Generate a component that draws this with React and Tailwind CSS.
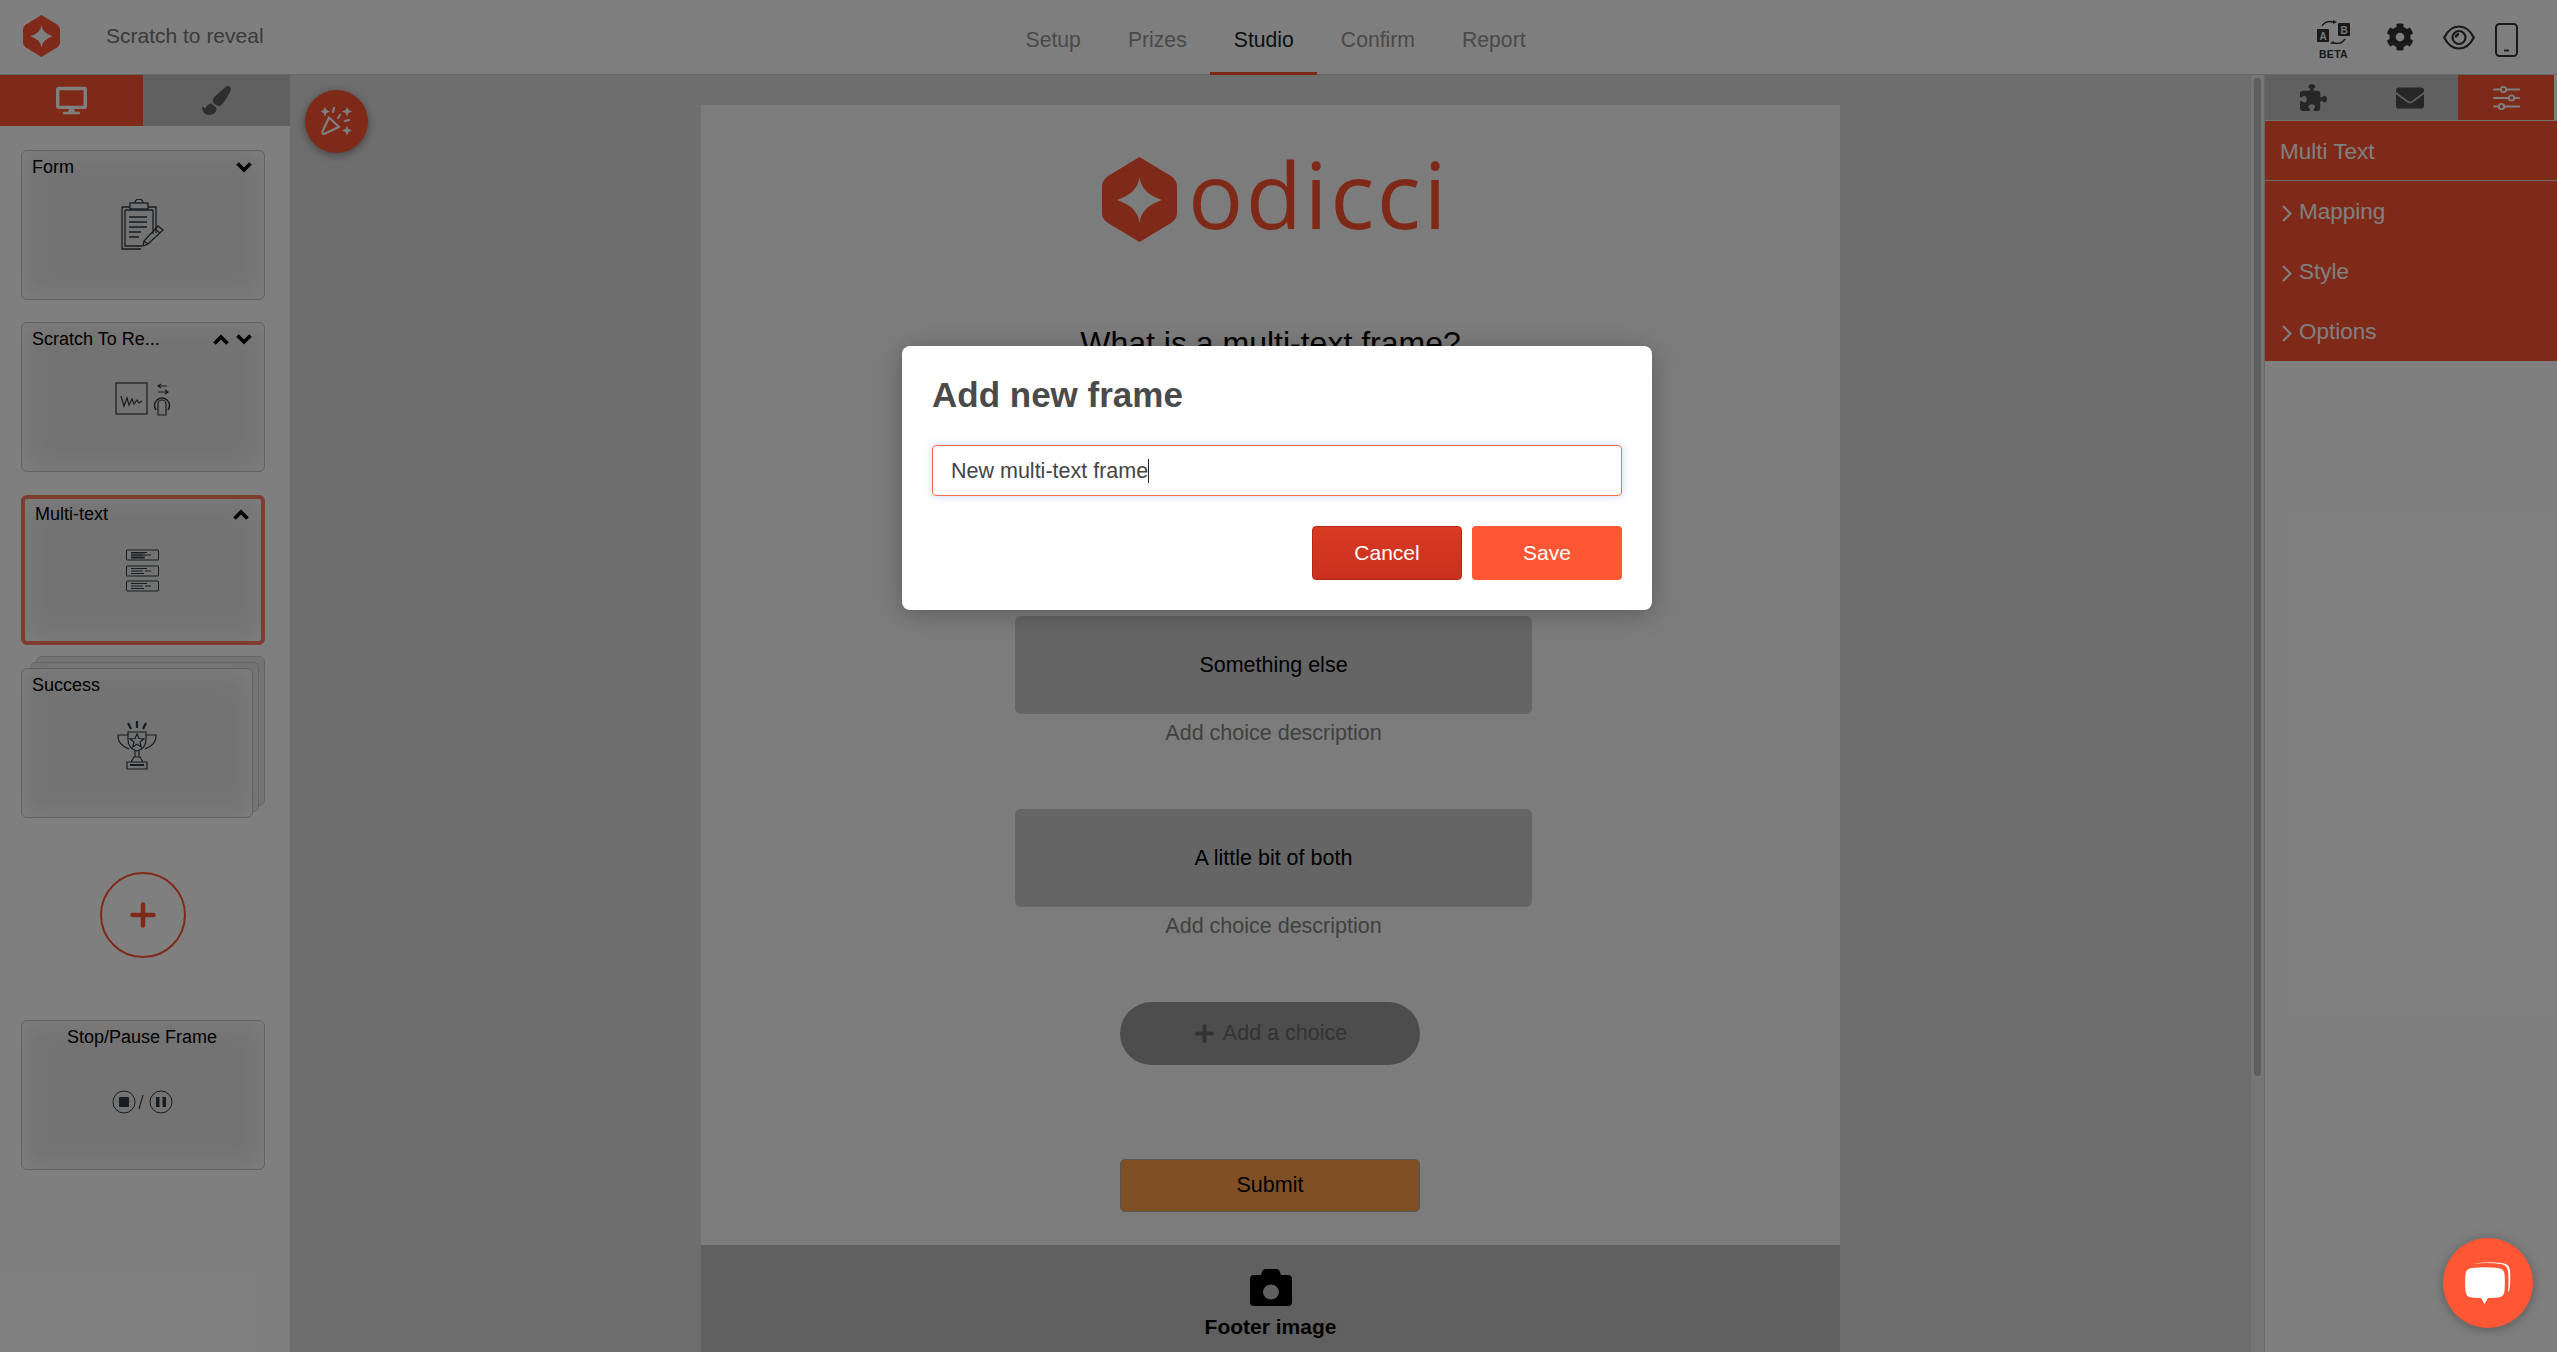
import React from "react";
import { FaDesktop, FaPaintBrush, FaEnvelope, FaCog, FaPlus } from "react-icons/fa";
import { FaPuzzlePiece } from "react-icons/fa6";
import { Plus } from "lucide-react";

const Hex = ({ className, star = "#ffffff", fill = "#ff5533" }) => (
  <svg viewBox="0 0 75 85" className={className}>
    <path fill={fill} d="M37.5 0 L69 19 Q75 23 75 30 L75 56 Q75 62 69 66 L37.5 85 L6 66 Q0 62 0 56 L0 30 Q0 23 6 19 Z" />
    <path fill={star} d="M37.5 20 Q39 36 60 43 Q39 50 37.5 66 Q36 50 15 43 Q36 36 37.5 20 Z" />
  </svg>
);

const Chevron = ({ up }) => (
  <svg viewBox="0 0 16 11" className="w-[16px] h-[11px]" fill="none" stroke="#000" strokeWidth="3.600" strokeLinejoin="miter">
    <path d={up ? "M1.500 9.500L8 3l6.500 6.500" : "M1.500 1.500L8 8l6.500-6.500"} />
  </svg>
);

const ClipboardIcon = () => (
  <svg viewBox="0 0 44 52" className="w-[44px] h-[52px]" fill="none" stroke="#2f3a40" strokeWidth="1.3">
    <path d="M1 8h8M27 8h8v26M1 8v42h19" />
    <path d="M4 11v36h17M32 11v24M4 11h28" />
    <rect x="9" y="4" width="18" height="6" />
    <path d="M14 4a4 4 0 0 1 8 0" />
    <path d="M8 18h18M8 23h18M8 28h18M8 33h12M8 38h10" strokeWidth="1.5" />
    <path d="M22 47l1-5 14-15 5 4-15 14z" />
    <path d="M34 30l5 4M23 42l4 3" />
  </svg>
);

const ScratchIcon = () => (
  <svg viewBox="0 0 56 34" className="w-[56px] h-[34px]" fill="none" stroke="#2f3a40" strokeWidth="1.2">
    <rect x="1" y="1" width="31" height="31" />
    <path d="M6 14l3 10 3-8 2 7 3-6 2 5 3-4 2 3 3-2" />
    <path d="M52 4H44M46 2l-3 2 3 2M43 10h10M50 8l3 2-3 2" />
    <path d="M43 33V22a4 4 0 0 1 8 0v11z" />
    <path d="M41 28a7.5 7.5 0 1 1 12 0" strokeWidth="1.5" />
  </svg>
);

const MultiTextIcon = () => (
  <svg viewBox="0 0 34 44" className="w-[34px] h-[44px]" fill="none" stroke="#2f3a40" strokeWidth="1">
    {[1, 17, 32].map((y) => (
      <g key={y}>
        <rect x="0.5" y={y} width="32" height="10" rx="0.5" />
        <path d={`M5 ${y + 2.5}h16M5 ${y + 5}h12M19 ${y + 5}h6M5 ${y + 7.5}h13`} />
      </g>
    ))}
    <rect x="5" y="3" width="14" height="7" fill="#2f3a40" opacity="0.5" stroke="none" />
  </svg>
);

const TrophyIcon = () => (
  <svg viewBox="0 0 40 52" className="w-[40px] h-[52px]" fill="none" stroke="#2f3a40" strokeWidth="1.2">
    <path d="M11 12h18v8c0 6-4 10-9 11-5-1-9-5-9-11z" />
    <path d="M11 15H1c0 8 4 11 11 14M29 15h10c0 8-4 11-11 14" />
    <path d="M20 14l2 4.500 5 .5-4 3 1.200 5-4.200-2.700-4.200 2.700 1.200-5-4-3 5-.5z" />
    <path d="M18 31v6h4v-6M14 42l3-5h6l3 5M10 42h20v7H10z" />
    <path d="M13 45h14" strokeWidth="2" />
    <path d="M20 1v7M11 3l3 6M29 3l-3 6" strokeWidth="2.200" />
  </svg>
);

const StopPauseIcon = () => (
  <svg viewBox="0 0 62 24" className="w-[62px] h-[24px]" fill="none" stroke="#2f3a40" strokeWidth="1">
    <circle cx="12" cy="12" r="11" />
    <rect x="7" y="7" width="10" height="10" rx="1" fill="#2f3a40" stroke="none" />
    <path d="M27 19l4-14" strokeWidth="1.100" />
    <circle cx="49" cy="12" r="11" />
    <rect x="44" y="7" width="3.500" height="10" fill="#2f3a40" stroke="none" />
    <rect x="50.500" y="7" width="3.500" height="10" fill="#2f3a40" stroke="none" />
  </svg>
);

const ABIcon = () => (
  <div className="flex flex-col items-center w-[33px]">
    <svg viewBox="0 0 33 24" className="w-[33px] h-[24px]">
      <rect x="0" y="9" width="12" height="13" rx="1" fill="#333" />
      <rect x="21" y="3" width="12" height="13" rx="1" fill="#333" />
      <text x="6" y="19.500" textAnchor="middle" fontSize="10" fontWeight="700" fill="#eee" fontFamily="Liberation Sans, sans-serif">A</text>
      <text x="27" y="13.500" textAnchor="middle" fontSize="10" fontWeight="700" fill="#eee" fontFamily="Liberation Sans, sans-serif">B</text>
      <path d="M5 6a10 10 0 0 1 11-4" fill="none" stroke="#333" strokeWidth="1.400" />
      <path d="M28 19a10 10 0 0 1-11 4" fill="none" stroke="#333" strokeWidth="1.400" />
      <path d="M16 0l4 2-4 2zM17 21l-4 2 4 2z" fill="#333" />
    </svg>
    <span className="text-[10.500px] font-bold leading-none mt-[5px] tracking-[0.3px] text-[#333] whitespace-nowrap">BETA</span>
  </div>
);

const EyeIcon = () => (
  <svg viewBox="0 0 32 25" className="w-[32px] h-[25px]" fill="none" stroke="#333" strokeWidth="2.200">
    <path d="M1.200 12.500C5 5 10 1.500 16 1.500S27 5 30.800 12.500C27 20 22 23.500 16 23.500S5 20 1.200 12.500z" />
    <circle cx="16" cy="12.500" r="6.500" />
    <path d="M13 12.500a3.500 3.500 0 0 1 3-3.500" strokeWidth="2.500" />
  </svg>
);

const PhoneIcon = () => (
  <svg viewBox="0 0 23 34" className="w-[23px] h-[34px]" fill="none" stroke="#333" strokeWidth="2">
    <rect x="1" y="1" width="21" height="32" rx="3.500" />
    <path d="M9 27.500h5" strokeWidth="1.800" />
  </svg>
);

const SlidersIcon = () => (
  <svg viewBox="0 0 27 25" className="w-[27px] h-[25px]" fill="none" stroke="#fff" strokeWidth="2.200" strokeLinecap="round">
    <path d="M1 4.500h7M13 4.500h13M1 13h15M21 13h5M1 21.500h5M11 21.500h15" />
    <circle cx="10.500" cy="4.500" r="2.700" strokeWidth="1.800" />
    <circle cx="18.500" cy="13" r="2.700" strokeWidth="1.800" />
    <circle cx="8.500" cy="21.500" r="2.700" strokeWidth="1.800" />
  </svg>
);

const PopperIcon = () => (
  <svg viewBox="0 0 32 32" className="w-[32px] h-[32px]" fill="none" stroke="#fff" strokeWidth="2.200" strokeLinecap="round" strokeLinejoin="round">
    <path d="M8 11.500L1.500 25.500q-.8 2.800 2 2.200L18 21z" />
    <path d="M13 2l-1 4M24 15l4-1M17 12l2-3" />
    <path fill="#fff" stroke="none" d="M4 1l1.500 3L9 5.500 5.500 7 4 10.500 2.500 7-.5 5.500 2.500 4zM26 1l1.500 3 3.500 1.500L27.500 7 26 10.500 24.500 7 21 5.500 24.500 4zM26 20l1.500 3 3.500 1.500-3.500 1.500-1.500 3.500-1.500-3.500-3.500-1.500 3.500-1.500z" />
  </svg>
);

const CameraIcon = () => (
  <svg viewBox="0 0 42 37" className="w-[42px] h-[37px]">
    <path fill="#000" d="M4 6h7l1.500-4q.8-2 3-2h11q2.200 0 3 2L31 6h7q4 0 4 4v23q0 4-4 4H4q-4 0-4-4V10q0-4 4-4z" />
    <ellipse cx="21" cy="23" rx="8" ry="7.500" fill="#c0c0c0" />
  </svg>
);

const FrameCard = ({ title, up, down, icon, active, center, widthClass }) => (
  <div className={`relative h-[150px] rounded-[6px] bg-[#e6e6e6] shadow-[inset_0_0_28px_#ffffff] flex flex-col ${widthClass || "w-[244px]"} ${active ? "border-[4px] border-[#ff7a60]" : "border border-[#c4c4c4]"}`}>
    <div className={`flex items-center h-[33px] ${active ? "-mt-[1px]" : ""} pl-[10px] pr-[12px] ${center ? "justify-center" : "justify-between"}`}>
      <span className="text-[18px] text-black whitespace-nowrap">{title}</span>
      <span className="flex gap-[7px]">
        {up && <Chevron up />}
        {down && <Chevron />}
      </span>
    </div>
    <div className={`flex justify-center ${active ? "mt-[16px]" : "mt-[15px]"}`}>{icon}</div>
  </div>
);

const Choice = ({ label }) => (
  <>
    <div className="ml-[6px] w-[517px] h-[98px] rounded-[6px] bg-[#cacaca] flex items-center justify-center text-[21.500px] text-black">{label}</div>
    <p className="ml-[6px] mt-[7px] h-[24px] leading-[24px] text-[21.500px] text-[#828282]">Add choice description</p>
  </>
);

export default function App() {
  return (
    <div className="relative h-screen w-full overflow-hidden flex flex-col bg-white font-['Liberation_Sans',Arial,sans-serif]">
      <header className="h-[74px] shrink-0 flex items-center bg-gradient-to-b from-white to-[#fcfcfc] relative pl-[23px] pr-[39px]">
        <Hex className="w-[37px] h-[42px] -mt-[2px]" />
        <span className="ml-[46px] text-[21px] -mt-[2px] text-[#757575]">Scratch to reveal</span>
        <nav className="absolute left-[1002px] top-0 h-[75px] flex text-[21.200px] text-[#949494]">
          {["Setup", "Prizes", "Studio", "Confirm", "Report"].map((t) => (
            <div key={t} className={`px-[23.500px] flex items-center pt-[8px] border-b-[3px] ${t === "Studio" ? "border-[#ff5533] text-[#222]" : "border-transparent"}`}>{t}</div>
          ))}
        </nav>
        <div className="ml-auto flex items-center mt-[5px]">
          <ABIcon />
          <FaCog className="ml-[36px] -mt-[5px] text-[28px] text-[#333]" />
          <div className="ml-[29px] -mt-[4px]"><EyeIcon /></div>
          <div className="ml-[20px]"><PhoneIcon /></div>
        </div>
      </header>

      <main className="flex-1 flex min-h-0 border-t border-[#cfcfcf]">
        <aside className="w-[290px] shrink-0 flex flex-col bg-white">
          <div className="flex h-[51px] shrink-0">
            <div className="w-[143px] bg-[#ff5533] flex items-center justify-center">
              <FaDesktop className="text-[31px] text-white" />
            </div>
            <div className="flex-1 bg-[#c0c0c0] flex items-center justify-center">
              <FaPaintBrush className="text-[29px] text-[#5c5c5c]" />
            </div>
          </div>
          <div className="pl-[21px] pt-[24px] flex flex-col">
            <FrameCard title="Form" down icon={<ClipboardIcon />} />
            <div className="mt-[22px]">
              <FrameCard title="Scratch To Re..." up down icon={<div className="mt-[11px]"><ScratchIcon /></div>} />
            </div>
            <div className="mt-[23px]">
              <FrameCard title="Multi-text" up active icon={<div className="mt-[2px]"><MultiTextIcon /></div>} />
            </div>
            <div className="mt-[11px] relative w-[244px] h-[162px]">
              <div className="absolute right-0 top-0 w-[229px] h-[150px] rounded-[6px] border border-[#c8c8c8] bg-[#e9e9e9]" />
              <div className="absolute right-[6px] top-[6px] w-[229px] h-[150px] rounded-[6px] border border-[#c8c8c8] bg-[#e9e9e9]" />
              <div className="absolute left-0 top-[12px]">
                <FrameCard title="Success" icon={<div className="mt-[3px]"><TrophyIcon /></div>} widthClass="w-[232px]" />
              </div>
            </div>
            <div className="mt-[54px] ml-[79px] w-[86px] h-[86px] rounded-full border-[2px] border-[#ff5533] flex items-center justify-center">
              <Plus className="w-[36px] h-[36px] text-[#ff5533]" strokeWidth={3} />
            </div>
            <div className="mt-[62px]">
              <FrameCard title="Stop/Pause Frame" center icon={<div className="mt-[21px]"><StopPauseIcon /></div>} />
            </div>
          </div>
        </aside>

        <section className="relative flex-1 min-w-0 bg-[#dcdcdc] overflow-hidden">
          <div className="absolute left-[15px] top-[15px] w-[63px] h-[63px] rounded-full bg-[#ff5533] shadow-[0_2px_8px_rgba(0,0,0,0.4)] flex items-center justify-center">
            <PopperIcon />
          </div>
          <div className="mt-[30px] mx-auto w-[1139px] bg-[#f8f8f8] flex flex-col items-center">
            <div className="flex items-center h-[85px] mt-[52px] ml-[10px]">
              <Hex className="w-[75px] h-[85px]" fill="#ff5533" star="#f8f8f8" />
              <span className="ml-[11px] text-[92px] tracking-[2.500px] leading-none font-['Open_Sans',sans-serif] text-[#ff5533] -mt-[12px]">odicci</span>
            </div>
            <h2 className="mt-[81px] text-[32px] leading-[40px] text-black">What is a multi-text frame?</h2>
            <div className="h-[253px]" />
            <Choice label="Something else" />
            <div className="h-[64px]" />
            <Choice label="A little bit of both" />
            <div className="mt-[64px] w-[300px] h-[63px] rounded-full bg-[#9a9a9a] flex items-center justify-center gap-[8px] text-[21.500px] text-[#666] -ml-[1px]">
              <FaPlus className="text-[21px]" />
              <span className="-mr-[1px]">Add a choice</span>
            </div>
            <div className="mt-[94px] w-[300px] h-[53px] rounded-[5px] bg-[#ff9f4a] border border-[#aaa] flex items-center justify-center text-[21.500px] text-black -ml-[1px]">Submit</div>
            <div className="mt-[33px] w-full h-[200px] bg-[#c0c0c0] flex flex-col items-center pt-[24px]">
              <CameraIcon />
              <span className="mt-[5px] text-[21px] font-bold text-black">Footer image</span>
            </div>
          </div>
        </section>

        <div className="w-[14px] shrink-0 bg-[#ececec] border-r border-[#d0d0d0] pt-[3px] px-[3px]">
          <div className="h-[998px] rounded-full bg-[#bcbcbc]" />
        </div>

        <aside className="w-[292px] shrink-0 flex flex-col bg-white">
          <div className="flex h-[45px] text-[#4c4c4c]">
            <div className="w-[96px] bg-[#c0c0c0] flex items-center justify-center"><FaPuzzlePiece className="text-[27px]" /></div>
            <div className="w-[97px] bg-[#c0c0c0] flex items-center justify-center"><FaEnvelope className="text-[28px]" /></div>
            <div className="w-[96px] bg-[#ff5533] flex items-center justify-center"><SlidersIcon /></div>
          </div>
          <div className="bg-[#ff5533] text-white text-[22.500px] border-t border-[#e8e8e8]">
            <div className="h-[60px] flex items-center pl-[15px] pt-[2px] border-b border-[#ddd]">Multi Text</div>
            {["Mapping", "Style", "Options"].map((t) => (
              <div key={t} className="h-[60px] flex items-center pl-[17px] pt-[2px]">
                <svg viewBox="0 0 10 17" className="w-[10px] h-[17px] mr-[7px] mt-[2px] shrink-0" fill="none" stroke="#fff" strokeWidth="2.200">
                  <path d="M1 1l7.500 7.500L1 16" />
                </svg>
                {t}
              </div>
            ))}
          </div>
        </aside>
      </main>

      <div className="absolute inset-0 bg-black/50" />

      <div className="absolute left-[902px] top-[346px] w-[750px] h-[264px] rounded-[8px] bg-white px-[30px] pt-[28px] flex flex-col shadow-[0_4px_24px_rgba(0,0,0,0.25)]">
        <h3 className="text-[35px] leading-[42px] font-bold text-[#4a4a4a]">Add new frame</h3>
        <div className="mt-[29px] h-[51px] rounded-[4px] border border-[#fb6a4c] shadow-[0_0_8px_rgba(120,170,240,0.45)] flex items-center pl-[18px] pt-[1px] text-[21.500px] text-[#444]">
          New multi-text frame<span className="w-[1px] h-[24px] bg-[#222]" />
        </div>
        <div className="mt-[30px] flex justify-end gap-[10px]">
          <button className="w-[150px] h-[54px] rounded-[4px] bg-gradient-to-b from-[#d93a22] to-[#c9301e] border border-[#b3261a] text-white text-[21px]">Cancel</button>
          <button className="w-[150px] h-[54px] rounded-[4px] bg-[#ff5733] text-white text-[21px]">Save</button>
        </div>
      </div>

      <div className="absolute left-[2443px] top-[1238px] w-[90px] h-[90px] rounded-full bg-[#ff5733] shadow-[0_2px_12px_rgba(0,0,0,0.3)] flex items-center justify-center">
        <svg viewBox="0 0 46 46" className="w-[46px] h-[46px]" fill="#fff">
          <path d="M7 8q13-1.500 26 0 6 .5 6.500 6 .8 9 0 17-.5 6-6.500 6.500-5 .5-10 .5l-3.500 6-3.500-6q-4 0-9-.5Q1 37.500 .5 31-.3 22 .5 14 1 8.500 7 8z" />
          <path d="M9 4q10-3 28-1 7 .5 8 7 .8 10-.5 20l-1.500 2q1-11 0-21-1-6-7-7-14-2-27 0z" />
        </svg>
      </div>
    </div>
  );
}
